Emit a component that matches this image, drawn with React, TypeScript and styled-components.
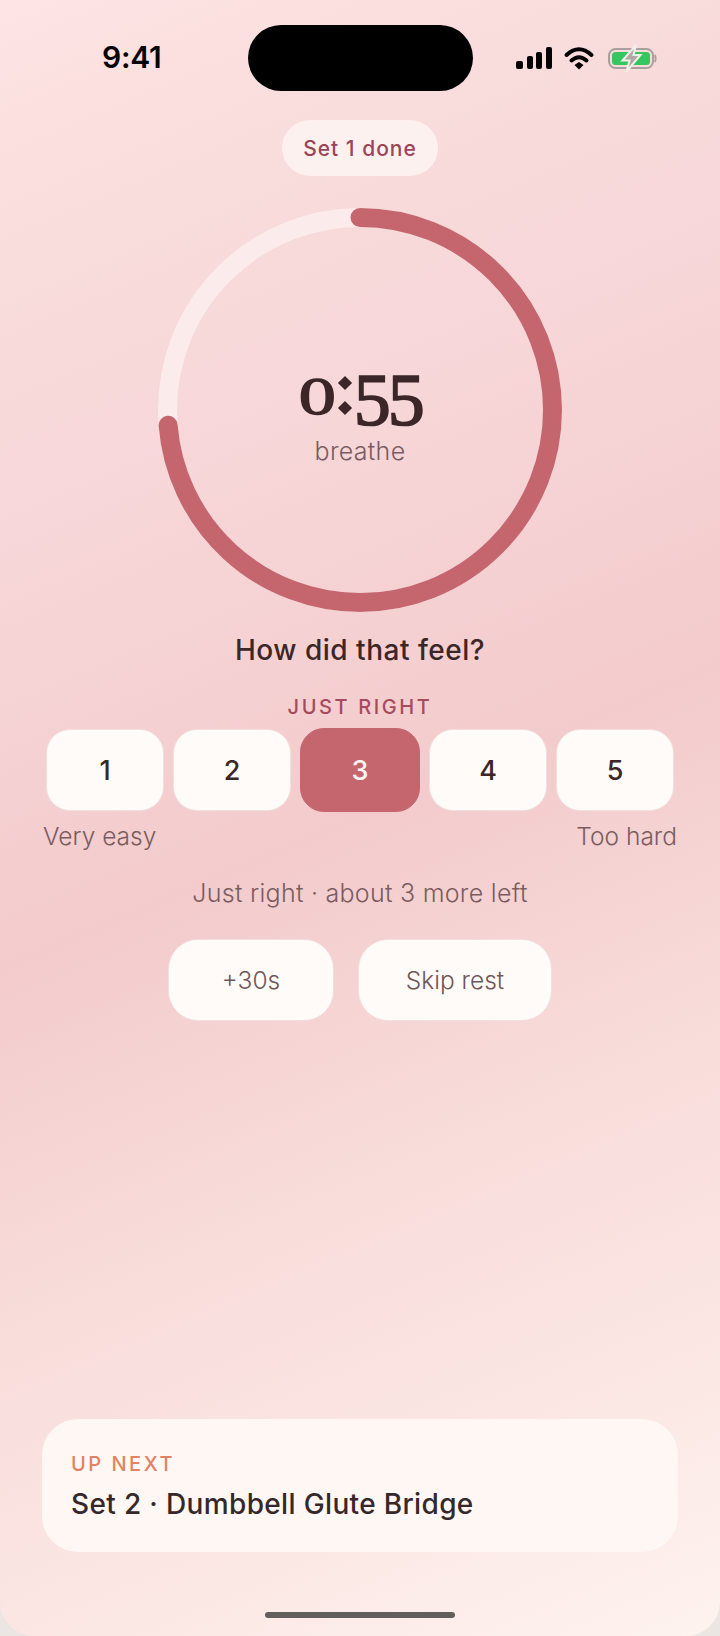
import React from "react";
import styled, { createGlobalStyle } from "styled-components";

const Global = createGlobalStyle`
  html, body { margin: 0; padding: 0; background: #ebe6e2; }
  body { width: 720px; height: 1636px; overflow: hidden; font-family: "Inter", "Liberation Sans", sans-serif; }
`;

const Screen = styled.div`
  position: relative;
  width: 720px;
  height: 1636px;
  display: flex;
  flex-direction: column;
  align-items: center;
  overflow: hidden;
  border-radius: 0 0 34px 34px;
  background: linear-gradient(157deg, #fee4e4 0%, #f9dcdc 14%, #f7d6d8 30%, #f3cbcc 50%, #f8dcda 68%, #fbe6e3 84%, #fef3ef 100%);
`;

const StatusBar = styled.div`
  width: 100%;
  height: 120px;
  box-sizing: border-box;
  padding-top: 25px;
  display: grid;
  grid-template-columns: 1fr 225px 1fr;
  align-items: start;
`;

const Clock = styled.div`
  padding-left: 102px;
  margin-top: 15px;
  font: 600 30px/34px "Inter", sans-serif;
  color: #050505;
  letter-spacing: -0.3px;
`;

const Island = styled.div`
  height: 66px;
  border-radius: 33px;
  background: #000;
`;

const StatusIcons = styled.div`
  display: flex;
  justify-content: flex-end;
  padding-right: 60px;
  margin-top: 15px;
`;

const Pill = styled.div`
  height: 56px;
  padding: 0 21.5px;
  display: flex;
  align-items: center;
  border-radius: 28px;
  background: #fdf1ef;
  color: #9c4458;
  font-size: 21px;
  font-weight: 500;
  letter-spacing: 1px;
`;

const Ring = styled.div`
  position: relative;
  margin-top: 32px;
  width: 404px;
  height: 404px;
`;

const RingCenter = styled.div`
  position: absolute;
  inset: 0;
  display: flex;
  flex-direction: column;
  align-items: center;
  justify-content: center;
  padding-top: 14px;
  box-sizing: border-box;
`;

const Timer = styled.div`
  display: flex;
  align-items: baseline;
  height: 62px;
  font-family: "Liberation Serif", serif;
  font-size: 74px;
  line-height: 62px;
  color: #3b2628;
`;

const Zero = styled.span`
  font-size: 53px;
  font-weight: 400;
  margin: 0 5.5px;
  transform: translateY(-11px) scaleX(1.4);
  -webkit-text-stroke: 1.3px #3b2628;
`;

const Colon = styled.span`
  position: relative;
  align-self: stretch;
  width: 18px;
  font-size: 20px;
  text-align: center;
  color: transparent;
  &::before, &::after {
    content: "";
    position: absolute;
    left: 4px;
    width: 10px;
    height: 10px;
    background: #3b2628;
    transform: rotate(45deg);
  }
  &::before { top: 9px; }
  &::after { top: 34px; }
`;

const Fives = styled.span`
  font-weight: 400;
  letter-spacing: -3px;
  -webkit-text-stroke: 1.7px #3b2628;
`;

const TimerLabel = styled.div`
  margin-top: 6px;
  font-size: 25px;
  font-weight: 300;
  line-height: 28px;
  color: #7a5c60;
  letter-spacing: 0.3px;
`;

const Question = styled.div`
  margin-top: 22px;
  font-size: 28px;
  line-height: 32px;
  font-weight: 500;
  color: #3b2628;
  letter-spacing: 0.5px;
`;

const Effort = styled.div`
  margin-top: 28px;
  font-size: 20px;
  line-height: 26px;
  font-weight: 500;
  letter-spacing: 2.6px;
  color: #a64a5e;
`;

const Scale = styled.div`
  margin-top: 8px;
  width: 628px;
  display: flex;
  justify-content: space-between;
  align-items: center;
`;

const Rate = styled.div<{ $active?: boolean }>`
  box-sizing: border-box;
  width: ${(p) => (p.$active ? "120px" : "118px")};
  height: ${(p) => (p.$active ? "84px" : "82px")};
  display: flex;
  align-items: center;
  justify-content: center;
  border-radius: 24px;
  background: ${(p) => (p.$active ? "#c5666f" : "#fffbf8")};
  border: 1px solid ${(p) => (p.$active ? "#c5666f" : "#f3dfdd")};
  color: ${(p) => (p.$active ? "#fff6f3" : "#3b2628")};
  font-size: 27px;
  font-weight: 500;
`;

const Ends = styled.div`
  margin-top: 10px;
  width: 634px;
  display: flex;
  justify-content: space-between;
  font-size: 24.5px;
  font-weight: 300;
  line-height: 28px;
  color: #7a5c60;
`;

const Hint = styled.div`
  margin-top: 29px;
  font-size: 25px;
  font-weight: 300;
  line-height: 28px;
  letter-spacing: 0.27px;
  color: #7a5c60;
`;

const Actions = styled.div`
  margin-top: 32px;
  display: flex;
  gap: 24px;
`;

const ActionButton = styled.div<{ $w: number }>`
  box-sizing: border-box;
  width: ${(p) => p.$w}px;
  height: 82px;
  display: flex;
  align-items: center;
  justify-content: center;
  border-radius: 30px;
  background: #fffbf8;
  border: 1px solid #f3dfdd;
  color: #6f5659;
  font-size: 24.5px;
  font-weight: 300;
`;

const NextCard = styled.div`
  box-sizing: border-box;
  margin-top: auto;
  margin-bottom: 84px;
  width: 636px;
  height: 133px;
  padding: 33px 29px 0;
  border-radius: 36px;
  background: #fff7f4;
`;

const NextLabel = styled.div`
  font-size: 20px;
  line-height: 24px;
  font-weight: 500;
  letter-spacing: 2.5px;
  color: #e08363;
`;

const NextTitle = styled.div`
  margin-top: 12px;
  font-size: 28px;
  line-height: 32px;
  font-weight: 500;
  letter-spacing: 0.35px;
  color: #35282a;
`;

const HomeBar = styled.div`
  position: absolute;
  left: 265px;
  bottom: 18px;
  width: 190px;
  height: 6.5px;
  border-radius: 4px;
  background: #625e5c;
`;

const cx = 202, cy = 202, r = 192.5;
const circ = 2 * Math.PI * r;

export default function App() {
  return (
    <Screen>
      <Global />
      <StatusBar>
        <Clock>9:41</Clock>
        <Island />
        <StatusIcons>
          <svg width="150" height="36" viewBox="0 0 150 36">
            <rect x="6" y="21" width="7" height="8" rx="2" fill="#000" />
            <rect x="17" y="16" width="6" height="13" rx="2" fill="#000" />
            <rect x="26" y="12" width="6" height="17" rx="2" fill="#000" />
            <rect x="36" y="7" width="6" height="22" rx="2" fill="#000" />
            <path d="M56.500 15 Q69 3.500 81.500 15" fill="none" stroke="#000" strokeWidth="4" strokeLinecap="round" />
            <path d="M61.500 20.500 Q69 14 76.500 20.500" fill="none" stroke="#000" strokeWidth="4" strokeLinecap="round" />
            <path d="M64.500 25 L69 22 L73.500 25 L69 29.500 Z" fill="#000" />
            <rect x="99" y="9" width="44" height="19" rx="6.500" fill="none" stroke="#a8a09e" strokeWidth="2" />
            <rect x="102" y="12" width="38" height="13" rx="3.500" fill="#35c65f" />
            <path d="M145 15 Q146.500 18.500 145 22" fill="none" stroke="#a8a09e" strokeWidth="2" />
            <path d="M126 5 L112.500 20.500 H119.500 L116.500 31.500 L130.500 15 H123.500 Z" fill="#b3a8a6" stroke="#ecf1e8" strokeWidth="2" />
          </svg>
        </StatusIcons>
      </StatusBar>
      <Pill>Set 1 done</Pill>
      <Ring>
        <svg width="404" height="404" viewBox="0 0 404 404">
          <circle cx={cx} cy={cy} r={r} fill="none" stroke="#fbeceb" strokeWidth="19" />
          <circle
            cx={cx}
            cy={cy}
            r={r}
            fill="none"
            stroke="#c5666f"
            strokeWidth="19"
            strokeLinecap="round"
            strokeDasharray={`${circ * 0.737} ${circ}`}
            transform={`rotate(-90 ${cx} ${cy})`}
          />
        </svg>
        <RingCenter>
          <Timer>
            <Zero>0</Zero>
            <Colon>:</Colon>
            <Fives>55</Fives>
          </Timer>
          <TimerLabel>breathe</TimerLabel>
        </RingCenter>
      </Ring>
      <Question>How did that feel?</Question>
      <Effort>JUST RIGHT</Effort>
      <Scale>
        <Rate>1</Rate>
        <Rate>2</Rate>
        <Rate $active>3</Rate>
        <Rate>4</Rate>
        <Rate>5</Rate>
      </Scale>
      <Ends>
        <span>Very easy</span>
        <span>Too hard</span>
      </Ends>
      <Hint>Just right · about 3 more left</Hint>
      <Actions>
        <ActionButton $w={166}>+30s</ActionButton>
        <ActionButton $w={194}>Skip rest</ActionButton>
      </Actions>
      <NextCard>
        <NextLabel>UP NEXT</NextLabel>
        <NextTitle>Set 2 · Dumbbell Glute Bridge</NextTitle>
      </NextCard>
      <HomeBar />
    </Screen>
  );
}
